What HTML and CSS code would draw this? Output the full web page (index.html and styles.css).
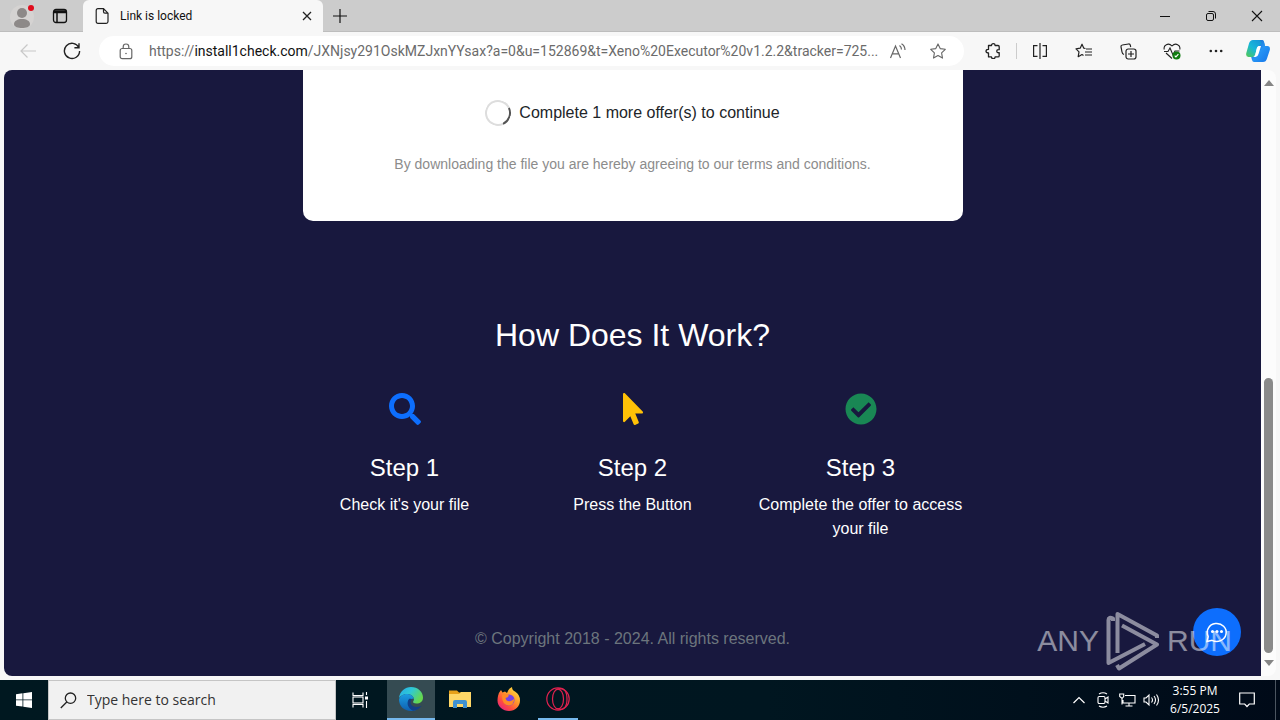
FILE: index.html
```html
<!DOCTYPE html>
<html lang="en">
<head>
<meta charset="utf-8">
<title>Link is locked</title>
<link rel="stylesheet" href="styles.css">
</head>
<body>
<header class="tabs">
  <button class="profile" aria-label="Profile"><svg width="26" height="26" viewBox="0 0 26 26"><circle cx="12" cy="14" r="12" fill="#d5d3d2"/><circle cx="12" cy="10" r="5" fill="#8d8988"/><path d="M4 21c0-3 3.500-5 8-5s8 2 8 5c0 3-4 4-8 4s-8-1-8-4z" fill="#8d8988"/><circle cx="21" cy="5" r="3" fill="#e00b1c"/></svg></button>
  <button class="tabmenu" aria-label="Tab actions"><svg width="16" height="16" viewBox="0 0 16 16" fill="none" stroke="#111" stroke-width="1.300"><rect x="1.500" y="1.500" width="13" height="13" rx="2.500"/><path d="M2 3h12M2 4.500h12M5 5v9" stroke-width="1.500"/></svg></button>
  <div class="tab">
    <svg width="14" height="16" viewBox="0 0 14 16" fill="none" stroke="#222" stroke-width="1.200"><path d="M3 .7h5.500L13 5.200V13.500q0 1.800-1.800 1.800H3q-1.800 0-1.800-1.800v-11Q1.200.7 3 .7zM8.500 1v2.800q0 1.400 1.400 1.400H13"/></svg>
    <span class="tab-title">Link is locked</span>
    <button class="tab-close" aria-label="Close tab"><svg width="10" height="10" viewBox="0 0 10 10" stroke="#222" stroke-width="1.300"><path d="M1 1l8 8M9 1L1 9"/></svg></button>
  </div>
  <button class="newtab" aria-label="New tab"><svg width="14" height="14" viewBox="0 0 14 14" stroke="#111" stroke-width="1.200"><path d="M7 0v14M0 7h14"/></svg></button>
  <div class="window-buttons">
    <button aria-label="Minimize"><svg width="12" height="12" viewBox="0 0 12 12" stroke="#111"><path d="M1 6.500h10"/></svg></button>
    <button aria-label="Restore"><svg width="12" height="12" viewBox="0 0 12 12" fill="none" stroke="#111"><rect x="1.500" y="3.500" width="7" height="7" rx="1.500"/><path d="M3.500 1.500H8q2.500 0 2.500 2.500v4.500"/></svg></button>
    <button aria-label="Close"><svg width="12" height="12" viewBox="0 0 12 12" stroke="#111" stroke-width="1.100"><path d="M1 1l10 10M11 1L1 11"/></svg></button>
  </div>
</header>
<nav class="toolbar">
  <button aria-label="Back"><svg width="18" height="16" viewBox="0 0 18 16" fill="none" stroke="#c8c8c8" stroke-width="1.200"><path d="M17 8H2M8.500 1.500L2 8l6.500 6.500"/></svg></button>
  <button aria-label="Refresh"><svg width="18" height="18" viewBox="0 0 18 18" fill="none" stroke="#222" stroke-width="1.400"><path d="M15.800 5.500A7.600 7.600 0 1 0 16.600 9M16 1.200v4.600h-4.600"/></svg></button>
  <div class="address">
    <svg width="14" height="17" viewBox="0 0 14 17" fill="none" stroke="#666" stroke-width="1.200"><rect x="1.200" y="5.500" width="11.600" height="10.200" rx="2"/><path d="M4.200 5.500V3.800a2.800 2.800 0 0 1 5.600 0v1.700"/><circle cx="7" cy="10.500" r=".8" fill="#666" stroke="none"/></svg>
    <div class="url" role="textbox" aria-label="Address" contenteditable="true" spellcheck="false">https://<span class="host">install1check.com</span>/JXNjsy291OskMZJxnYYsax?a=0&amp;u=152869&amp;t=Xeno%20Executor%20v1.2.2&amp;tracker=725...</div>
    <button aria-label="Read aloud"><svg width="18" height="16" viewBox="0 0 18 16" fill="none" stroke="#666" stroke-width="1.200"><path d="M1.500 15L6.500 3l5 12M3.200 10.800h6.600M10.500 2.500q2 1.500 2 4M12.500.8q3.500 2.200 3.500 6.200"/></svg></button>
    <button aria-label="Favorite"><svg width="16" height="16" viewBox="0 0 16 16" fill="none" stroke="#666" stroke-width="1.100" stroke-linejoin="round"><path d="M8 .9l2.200 4.700 5.100.7-3.700 3.600.9 5.200L8 12.600l-4.500 2.500.9-5.200L.7 6.300l5.100-.7z"/></svg></button>
  </div>
  <div class="tools">
    <button aria-label="Extensions"><svg width="16" height="16" viewBox="0 0 16 16" fill="none" stroke="#222" stroke-width="1.300" stroke-linejoin="round"><path d="M3.500 2.500h3q0-1.800 1.800-1.800t1.800 1.800h2.900q1.200 0 1.200 1.200v3q-2.400-.3-2.400 1.500t2.400 1.500v3q0 1.200-1.200 1.200h-2.900q0 1.800-1.800 1.800t-1.800-1.800h-3V10Q1 10 1 8.200t2.500-1.800z"/></svg></button>
    <span class="rule"></span>
    <button aria-label="Split screen"><svg width="16" height="16" viewBox="0 0 16 16" fill="none" stroke="#222" stroke-width="1.200"><path d="M5.500 2.600H1.600v10.800h3.900M8 0v16M10.500 2.600h3.900v10.800h-3.900"/></svg></button>
    <button aria-label="Favorites"><svg width="18" height="16" viewBox="0 0 18 16" fill="none" stroke="#222" stroke-width="1.200" stroke-linejoin="round"><path d="M10.500 5.500L8.800 5.200 7 1.200 5.200 5.200 1 5.900l3 3-.8 4.800L7 11.500l1.500.9M11 6h6M10 9h7M10 12h7"/></svg></button>
    <button aria-label="Collections"><svg width="17" height="17" viewBox="0 0 17 17" fill="none" stroke="#222" stroke-width="1.200"><path d="M4 11.500Q2.300 11 2 9L1 3.800Q.8 2.200 2.300 2L8.500 1q1.500-.2 1.800 1.200L10.700 4"/><rect x="6" y="6" width="10" height="10" rx="2.200"/><path d="M11 8v6M8 11h6"/></svg></button>
    <button aria-label="Browser essentials"><svg width="18" height="17" viewBox="0 0 18 17" fill="none" stroke="#222" stroke-width="1.100"><path d="M1.300 6.500C0 2 5.500-.8 9 3c3.500-3.800 9-1 7.700 3.500M3 10l6 5.500M1 8.500h4l2-3.500 3 7 2-4h4.500"/><circle cx="13.500" cy="12.500" r="4" fill="#107c10" stroke="none"/><path d="M11.700 12.700l1.200 1.200 2.500-2.800" stroke="#fff"/></svg></button>
    <button aria-label="Settings and more"><svg width="14" height="4" viewBox="0 0 14 4" fill="#222"><circle cx="1.800" cy="2" r="1.300"/><circle cx="7" cy="2" r="1.300"/><circle cx="12.200" cy="2" r="1.300"/></svg></button>
    <button class="copilot" aria-label="Copilot"><svg width="24" height="22" viewBox="0 0 24 22"><defs><linearGradient id="ca" x1="0" y1="1" x2="1" y2="0"><stop offset="0" stop-color="#54c94f"/><stop offset=".45" stop-color="#16b7d9"/><stop offset="1" stop-color="#1588d8"/></linearGradient><linearGradient id="cb" x1="0" y1="0" x2="1" y2="1"><stop offset="0" stop-color="#1556b8"/><stop offset=".5" stop-color="#2694f5"/><stop offset="1" stop-color="#1574e8"/></linearGradient></defs><path d="M7 0h9q1.500 0 2 2l1 4h-5q-2 0-3 3l-2 6q-.5 2-2 2H2.500Q-.5 17 .3 13L3 3.500Q4 0 7 0z" fill="url(#ca)"/><path d="M14 0h2q1.500 0 2 2l1 4h2.500q3 0 2.300 4L21 18.500Q20 22 17 22H8q-1.500 0-2-2l-.8-3H7q2 0 3-3l3-8q.7-2 3-2z" fill="url(#cb)"/><path d="M12.500 6H15l-2.500 8q-.8 3-3 3H7.500q1.500-1 2-3l1-5q.5-2.500 2-3z" fill="#fff"/></svg></button>
  </div>
</nav>
<div class="viewport">
  <main class="page">
    <section class="card">
      <p class="status"><span class="spinner"></span>Complete 1 more offer(s) to continue</p>
      <p class="terms">By downloading the file you are hereby agreeing to our terms and conditions.</p>
    </section>
    <section class="how">
      <h2>How Does It Work?</h2>
      <div class="steps">
        <article class="step">
          <svg width="32" height="32" viewBox="0 0 512 512" fill="#0d6efd"><path d="M505 442.700L405.300 343c-4.500-4.500-10.600-7-17-7H372c27.600-35.300 44-79.700 44-128C416 93.100 322.900 0 208 0S0 93.100 0 208s93.100 208 208 208c48.300 0 92.700-16.400 128-44v16.300c0 6.400 2.500 12.500 7 17l99.700 99.700c9.400 9.400 24.600 9.400 33.900 0l28.300-28.300c9.400-9.400 9.400-24.600.1-34zM208 336c-70.700 0-128-57.200-128-128 0-70.700 57.200-128 128-128 70.700 0 128 57.200 128 128 0 70.700-57.200 128-128 128z"/></svg>
          <h3>Step 1</h3><p>Check it's your file</p>
        </article>
        <article class="step">
          <svg width="20" height="32" viewBox="0 0 320 512" fill="#ffc107"><path d="M302.189 329.126H196.105l55.831 135.993c3.889 9.428-.555 19.999-9.444 23.999l-49.165 21.427c-9.165 4-19.443-.571-23.332-9.714l-53.053-129.136-86.664 89.138C18.729 472.710 0 463.554 0 447.977V18.299C0 1.899 19.921-6.096 30.277 5.443l284.412 292.542c11.472 11.179 3.007 31.141-12.500 31.141z"/></svg>
          <h3>Step 2</h3><p>Press the Button</p>
        </article>
        <article class="step">
          <svg width="32" height="32" viewBox="0 0 512 512" fill="#198754"><path d="M504 256c0 136.967-111.033 248-248 248S8 392.967 8 256 119.033 8 256 8s248 111.033 248 248zM227.314 387.314l184-184c6.248-6.248 6.248-16.379 0-22.627l-22.627-22.627c-6.248-6.248-16.379-6.249-22.628 0L216 308.118l-70.059-70.059c-6.248-6.248-16.379-6.248-22.628 0l-22.627 22.627c-6.248 6.248-6.248 16.379 0 22.627l104 104c6.249 6.249 16.379 6.249 22.628.001z"/></svg>
          <h3>Step 3</h3><p>Complete the offer to access your file</p>
        </article>
      </div>
    </section>
    <footer class="copyright">© Copyright 2018 - 2024. All rights reserved.</footer>
  </main>
  <div class="scrollbar">
    <svg width="10" height="6" viewBox="0 0 10 6" fill="#858585"><path d="M0 6L5 0l5 6z"/></svg>
    <span class="thumb"></span>
    <svg width="10" height="6" viewBox="0 0 10 6" fill="#858585"><path d="M0 0l5 6 5-6z"/></svg>
  </div>
  <button class="chat" aria-label="Chat"><svg width="26" height="24" viewBox="0 0 26 24" fill="none" stroke="#fff" stroke-width="1.500"><path d="M3 21.500l1.200-5A9.500 9 0 1 1 8 20.300z"/><g fill="#fff" stroke="none"><circle cx="8.500" cy="11.500" r="1.500"/><circle cx="13" cy="11.500" r="1.500"/><circle cx="17.500" cy="11.500" r="1.500"/></g></svg></button>
  <div class="watermark"><span>ANY</span><svg width="56" height="62" viewBox="0 0 56 62" fill="none" stroke="#fff" stroke-width="4" stroke-linejoin="round"><path d="M8 11V8.500Q3.500 6.500 3.500 10V53L40 34M12.500 43V4L52 25.500V28M17 15.500L52 34.500 14 58.500 12 55"/></svg><span>RUN</span></div>
</div>
<footer class="taskbar">
  <button aria-label="Start"><svg width="16" height="16" viewBox="0 0 16 16" fill="#fff"><path d="M0 2.200l6.500-.9v6.200H0zM7.300 1.200L16 0v7.500H7.300zM0 8.300h6.500v6.300L0 13.700zM7.300 8.300H16V16l-8.700-1.200z"/></svg></button>
  <label class="search"><svg width="17" height="17" viewBox="0 0 17 17" fill="none" stroke="#222" stroke-width="1.300"><circle cx="10.500" cy="6.200" r="5.200"/><path d="M6.800 10L.8 16"/></svg><input type="text" placeholder="Type here to search" aria-label="Search"></label>
  <button class="taskview" aria-label="Task View"><svg width="17" height="16" viewBox="0 0 17 16" fill="none" stroke="#fff" stroke-width="1.100"><path d="M1 .5v3h10v-3M1 15.500v-3h10v3M14.500 0v3M14.500 9v7"/><rect x="1" y="5" width="10" height="6"/><path d="M13 4.500h3v3h-3z" fill="#fff" stroke="none"/></svg></button>
  <button class="app active" aria-label="Microsoft Edge"><svg width="24" height="24" viewBox="0 0 24 24"><defs><linearGradient id="ea" x1="0" y1="0" x2="1" y2=".5"><stop offset="0" stop-color="#25a9e8"/><stop offset=".5" stop-color="#2fc8d6"/><stop offset="1" stop-color="#65d84e"/></linearGradient><linearGradient id="eb" x1="0" y1="0" x2="0" y2="1"><stop offset="0" stop-color="#1b9de2"/><stop offset="1" stop-color="#0f5faf"/></linearGradient></defs><path d="M0 11C1 4 6 0 12 0c7 0 12 5 12 10.500 0 4-3 6-6.500 6-3 0-4-1-3.200-2.200C16.500 11.500 13 7 8.500 7 5 7 2 8.500 0 11z" fill="url(#ea)"/><path d="M0 12.500C1 9 4.500 6.800 8.500 7c3.500.2 6 2.200 6.300 4.800-5-1-6.300 3-4.800 6.200 1.500 3.500 5 5 8 4.500-2 1.200-4 1.500-6 1.500C5 24 0 19 0 12.500z" fill="url(#eb)"/><path d="M10 12c-3 4-1 9.500 4 11.800 3.500-.3 6.500-2 8.500-5-4 2-9 1.500-10.500-1.500-.8-1.500-.6-3.500.6-5-1-.6-2-.6-2.600-.3z" fill="#123f87"/></svg></button>
  <button class="app" aria-label="File Explorer"><svg width="22" height="18" viewBox="0 0 22 18"><path d="M0 .5h8l2 2h12v4H0z" fill="#e7a11a"/><path d="M0 4h10l2-2h10v15H0z" fill="#ffd767"/><path d="M4 18v-6q0-2 2-2h10q2 0 2 2v6h-4v-4H8v4z" fill="#3f91d0"/></svg></button>
  <button class="app" aria-label="Firefox"><svg width="24" height="24" viewBox="0 0 24 24"><defs><linearGradient id="fa" x1="1" y1="0" x2=".2" y2="1"><stop offset="0" stop-color="#fff34a"/><stop offset=".45" stop-color="#ff9a2a"/><stop offset=".75" stop-color="#ff4a40"/><stop offset="1" stop-color="#e32284"/></linearGradient></defs><path d="M1 9Q2 5 4 3l1.500 2.500L8 4.500 10 6q1-4 5-6 0 3 3 4.500 5 3 5 9C23 19.500 18 24 12 24S.5 19.500.5 13.500Q.5 11 1 9z" fill="url(#fa)"/><circle cx="12" cy="13" r="5.500" fill="#7542e5"/><path d="M5 8q4-1.500 7 .5-1 2-3.500 2.500 1 4 5 3 3-.8 3.800-2.500Q17 18 12 18.500 5 18.500 5 8z" fill="#ff8a25"/></svg></button>
  <button class="app open" aria-label="Opera"><svg width="24" height="24" viewBox="0 0 24 24" fill="none" stroke="#e0224f" stroke-width="1.200"><circle cx="12" cy="12" r="11.200"/><ellipse cx="12" cy="12" rx="5.500" ry="9.800"/><path d="M10 2.500c9-3 11 3 11 9.500s-2 12.500-11 9.500"/></svg></button>
  <div class="tray">
    <button aria-label="Show hidden icons"><svg width="12" height="8" viewBox="0 0 12 8" fill="none" stroke="#fff" stroke-width="1.200"><path d="M.5 7L6 1.500 11.500 7"/></svg></button>
    <button aria-label="Meet now"><svg width="12" height="16" viewBox="0 0 12 16" fill="none" stroke="#fff" stroke-width="1.100"><rect x="1" y="4.500" width="7" height="7" rx="1.200"/><path d="M8 7l3-2v6L8 9M2 2q4-2.500 8 0M2 14q4 2.500 8 0"/></svg></button>
    <button aria-label="Network"><svg width="17" height="14" viewBox="0 0 17 14" fill="none" stroke="#fff" stroke-width="1.100"><path d="M6 2.500h10v7.500H4V7M10 10v3M6.500 13h7M.7 1h4v2.500L3.500 5h-1L.7 3.500zM3 5v6.500"/></svg></button>
    <button aria-label="Volume"><svg width="17" height="14" viewBox="0 0 17 14" fill="none" stroke="#fff" stroke-width="1.100"><path d="M1 5h2l3-3v10L3 9H1zM8.500 4.500q2 2.500 0 5M11 3q3 4 0 8M13.500 1.500q4 5.500 0 11"/></svg></button>
    <div class="clock"><time>3:55 PM</time><time>6/5/2025</time></div>
    <button class="notify" aria-label="Notifications"><svg width="16" height="16" viewBox="0 0 16 16" fill="none" stroke="#fff" stroke-width="1.200"><path d="M.7 1h14.600v11h-5L8 14.500 5.700 12h-5z"/></svg></button>
    <span class="peek"></span>
  </div>
</footer>
</body>
</html>
```

FILE: styles.css
```css
* { box-sizing: border-box; }
body {
  margin: 0;
  height: 100vh;
  display: flex;
  flex-direction: column;
  overflow: hidden;
  background: #f7f7f7;
  font-family: "Open Sans", "Noto Sans", sans-serif;
  color: #111;
}
button {
  display: flex;
  align-items: center;
  justify-content: center;
  padding: 0;
  border: 0;
  background: none;
  font: inherit;
  color: inherit;
}
h2, h3, p { margin: 0; font-weight: 400; }
svg { flex: none; display: block; }

.tabs {
  flex: none;
  height: 32px;
  display: flex;
  background: #cccccc;
  border-bottom: 1px solid #bdbdbd;
}
.profile { width: 44px; padding-left: 2px; }
.tabmenu { width: 32px; }
.tab {
  width: 240px;
  height: 32px;
  margin-left: 7px;
  padding: 0 11px 0 12px;
  display: flex;
  align-items: center;
  background: #f7f7f7;
  border-radius: 6px 6px 0 0;
}
.tab-title {
  flex: 1;
  padding-left: 11px;
  font-family: Roboto, sans-serif;
  font-size: 12px;
  line-height: 16px;
}
.tab-close { width: 10px; height: 20px; }
.newtab { width: 34px; }
.window-buttons { margin-left: auto; display: flex; }
.window-buttons button { width: 46px; }

.toolbar { flex: none; height: 38px; display: flex; align-items: center; padding-left: 6px; }
.toolbar > button { width: 44px; height: 32px; }
.address {
  flex: 1;
  min-width: 0;
  height: 30px;
  margin-left: 5px;
  padding: 0 6px 0 20px;
  display: flex;
  align-items: center;
  background: #fff;
  border-radius: 15px;
}
.url {
  flex: 1;
  min-width: 0;
  padding-left: 16px;
  overflow: hidden;
  white-space: nowrap;
  font-family: Roboto, sans-serif;
  font-size: 14px;
  line-height: 20px;
  color: #6b6b6b;
  outline: 0;
}
.host { color: #111; }
.address button { width: 40px; height: 28px; }
.tools { display: flex; align-items: center; padding: 0 2px 0 7px; }
.tools button { width: 44px; height: 32px; }
.tools .copilot { width: 40px; }
.rule { width: 1px; height: 16px; margin: 0 1px; background: #ccc; }

.viewport {
  position: relative;
  flex: 1;
  min-height: 0;
  margin: 0 4px 4px;
  display: flex;
  overflow: hidden;
  background: #fcfcfc;
  border-radius: 8px;
}
.page {
  flex: 1;
  display: flex;
  flex-direction: column;
  align-items: center;
  background: #18183e;
  color: #fff;
  font: 16px/24px "Liberation Sans", Arial, sans-serif;
  text-align: center;
}
.card {
  width: 100%;
  max-width: 660px;
  padding: 30px 24px 46px;
  background: #fff;
  border-radius: 0 0 10px 10px;
  color: #212529;
}
.status { display: flex; align-items: center; justify-content: center; gap: 8px; line-height: 26px; }
.spinner {
  width: 26px;
  height: 26px;
  border: 2px solid #ddd;
  border-right-color: #555;
  border-radius: 50%;
  transform: rotate(20deg);
}
.terms { margin-top: 28px; font-size: 14px; line-height: 21px; color: #8c8c8c; }
.how { width: 100%; max-width: 684px; padding-top: 95px; }
.how h2 { font-size: 32px; line-height: 38px; }
.steps { display: grid; grid-template-columns: repeat(3, 1fr); margin-top: 39px; }
.step { display: flex; flex-direction: column; align-items: center; padding: 0 12px; }
.step h3 { margin: 28px 0 11px; font-size: 24px; line-height: 29px; }
.copyright { margin-top: 86px; color: #6c757d; }

.scrollbar {
  width: 15px;
  padding: 10px 0;
  display: flex;
  flex-direction: column;
  align-items: center;
  justify-content: space-between;
}
.thumb { width: 9px; height: 47%; margin: auto 0 7px; background: #8a8a8a; border-radius: 5px; }
.chat {
  position: absolute;
  right: 35px;
  bottom: 20px;
  width: 48px;
  height: 48px;
  border-radius: 50%;
  background: #0d6efd;
}
.watermark {
  position: absolute;
  right: 44px;
  bottom: 4px;
  display: flex;
  align-items: center;
  gap: 6px;
  opacity: .5;
  color: #fff;
  font: 30px/62px "Liberation Sans", Arial, sans-serif;
  pointer-events: none;
}

.taskbar {
  flex: none;
  height: 40px;
  display: flex;
  background: linear-gradient(90deg, #001820, #001620 60%, #000a18);
  color: #fff;
}
.taskbar > button { width: 48px; }
.search {
  width: 288px;
  display: flex;
  align-items: center;
  gap: 10px;
  padding-left: 11px;
  background: #f1f1f1;
  border: 1px solid #c5c5c5;
}
.search input {
  flex: 1;
  min-width: 0;
  padding: 0;
  border: 0;
  outline: 0;
  background: none;
  font: 14px/20px "Open Sans", "Noto Sans", sans-serif;
}
.search input::placeholder { color: #333; opacity: 1; }
.taskbar .taskview { margin-right: 3px; }
.taskbar .app { margin-right: 1px; border-bottom: 2px solid transparent; }
.taskbar .active { background: #354b52; border-color: #76b9ed; }
.taskbar .open { width: 40px; margin-left: 4px; border-color: #76b9ed; }
.tray { margin-left: auto; display: flex; align-items: center; }
.tray button { width: 24px; height: 40px; }
.clock {
  width: 64px;
  display: flex;
  flex-direction: column;
  align-items: center;
  font-size: 12px;
  line-height: 18px;
}
.tray .notify { width: 40px; }
.peek { width: 5px; height: 40px; margin-left: 8px; border-left: 1px solid #4b5560; }
```
